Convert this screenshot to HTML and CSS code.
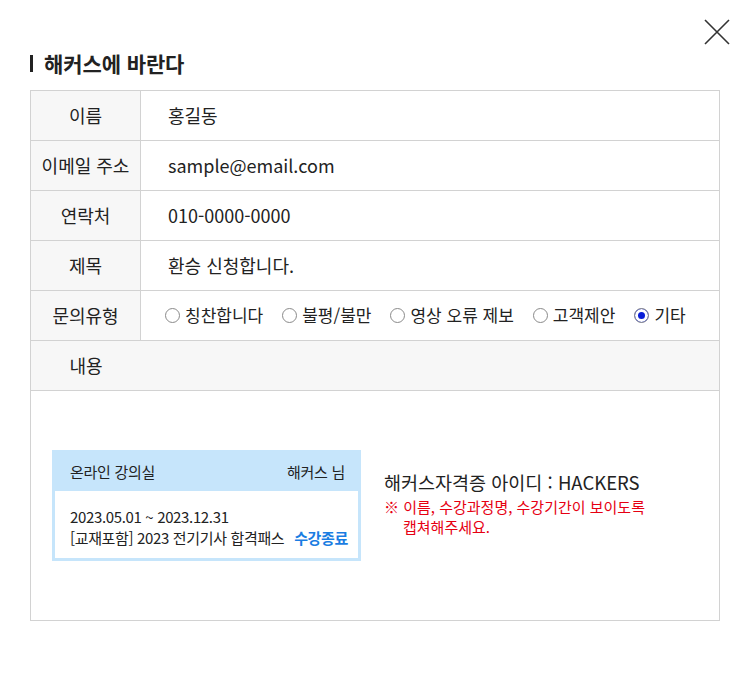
FILE: index.html
```html
<!DOCTYPE html>
<html lang="ko">
<head>
    <meta charset="UTF-8">
    <meta name="viewport" content="width=device-width, initial-scale=1.0">
    <title>해커스에 바란다</title>
    <link rel="stylesheet" href="styles.css">
</head>
<body>

    <div class="popup">
        <!-- Close button -->
        <button class="close" aria-label="닫기">
            <svg width="26" height="26" viewBox="0 0 26 26">
                <path d="M1 1 L25 25 M25 1 L1 25" stroke="#333" stroke-width="1.6" fill="none"/>
            </svg>
        </button>

        <!-- Title -->
        <h2 class="title">해커스에 바란다</h2>

        <table class="form-table">
            <tr>
                <th>이름</th>
                <td>홍길동</td>
            </tr>
            <tr>
                <th>이메일 주소</th>
                <td>sample@email.com</td>
            </tr>
            <tr>
                <th>연락처</th>
                <td>010-0000-0000</td>
            </tr>
            <tr>
                <th>제목</th>
                <td>환승 신청합니다.</td>
            </tr>
            <tr>
                <th>문의유형</th>
                <td class="radios">
                    <div class="radio-group">
                        <label class="radio"><span class="dot"></span>칭찬합니다</label>
                        <label class="radio"><span class="dot"></span>불평/불만</label>
                        <label class="radio"><span class="dot"></span>영상 오류 제보</label>
                        <label class="radio"><span class="dot"></span>고객제안</label>
                        <label class="radio"><span class="dot checked"></span>기타</label>
                    </div>
                </td>
            </tr>
            <tr>
                <th colspan="2" class="content-head"><span>내용</span></th>
            </tr>
            <tr>
                <td colspan="2" class="content">
                    <div class="content-inner">
                        <!-- Captured classroom card -->
                        <div class="capture">
                            <div class="capture-head">
                                <span>온라인 강의실</span>
                                <span>해커스 님</span>
                            </div>
                            <div class="capture-body">
                                <p>2023.05.01 ~ 2023.12.31</p>
                                <p>[교재포함] 2023 전기기사 합격패스 <strong>수강종료</strong></p>
                            </div>
                        </div>

                        <div class="note">
                            <p class="user-id">해커스자격증 아이디 : HACKERS</p>
                            <p class="warn">※ 이름, 수강과정명, 수강기간이 보이도록<br>캡쳐해주세요.</p>
                        </div>
                    </div>
                </td>
            </tr>
        </table>
    </div>

</body>
</html>
```

FILE: styles.css
```css
* {
    margin: 0;
    padding: 0;
    box-sizing: border-box;
}

body {
    font-family: "Noto Sans CJK KR", "Noto Sans", sans-serif;
    background-color: #fff;
    color: #222;
}

.popup {
    position: relative;
    width: 750px;
    padding: 50px 30px 0;
}

/* Close button */
.close {
    position: absolute;
    top: 19px;
    right: 20px;
    width: 26px;
    height: 26px;
    border: none;
    background: none;
    cursor: pointer;
}

.close svg {
    display: block;
}

/* Title */
.title {
    display: flex;
    align-items: center;
    height: 26px;
    margin-bottom: 14px;
    font-size: 21px;
    font-weight: bold;
    letter-spacing: -0.1px;
    color: #222;
}

.title::before {
    content: "";
    width: 3px;
    height: 17px;
    margin-right: 11px;
    background-color: #222;
}

/* Form table */
.form-table {
    width: 690px;
    border-collapse: collapse;
    font-size: 18px;
}

.form-table th,
.form-table td {
    height: 50px;
    border: 1px solid #d2d2d2;
    line-height: 24px;
    padding-bottom: 2px;
}

.form-table th {
    width: 110px;
    background-color: #f7f7f7;
    font-weight: normal;
    text-align: center;
}

.form-table td {
    padding-left: 27px;
}

/* Radio group */
.form-table td.radios {
    padding-left: 24px;
    font-size: 17px;
}

.radio-group {
    display: flex;
    align-items: center;
    gap: 19px;
}

.radio {
    display: flex;
    align-items: center;
}

.dot {
    width: 15px;
    height: 15px;
    margin-right: 5px;
    margin-top: 2px;
    border: 1px solid #8a8a8a;
    border-radius: 50%;
    background-color: #fff;
}

.dot.checked {
    background-color: #0a1ed8;
    box-shadow: inset 0 0 0 3px #fff;
}

/* Content */
.form-table th.content-head {
    text-align: left;
}

.content-head span {
    display: inline-block;
    width: 110px;
    text-align: center;
}

.form-table td.content {
    height: 230px;
    padding: 0 21px;
}

.content-inner {
    display: flex;
    align-items: center;
    gap: 23px;
}

.capture {
    width: 309px;
    border: 3px solid #c6e5fb;
    background-color: #fff;
    font-size: 15px;
    letter-spacing: -0.3px;
}

.capture-head {
    display: flex;
    justify-content: space-between;
    align-items: center;
    height: 38px;
    padding: 0 13px 0 15px;
    background-color: #c6e5fb;
}

.capture-body {
    padding: 15px 8px 10px 15px;
    font-size: 15px;
    letter-spacing: -0.35px;
    line-height: 21px;
    white-space: nowrap;
}

.capture-body strong {
    margin-left: 6px;
    color: #1a7de2;
}

.note {
    margin-top: -4px;
}

.user-id {
    font-size: 18.5px;
    margin-bottom: 3px;
}

.warn {
    padding-left: 19px;
    text-indent: -19px;
    font-size: 15px;
    line-height: 20px;
    color: #e60012;
}
```
